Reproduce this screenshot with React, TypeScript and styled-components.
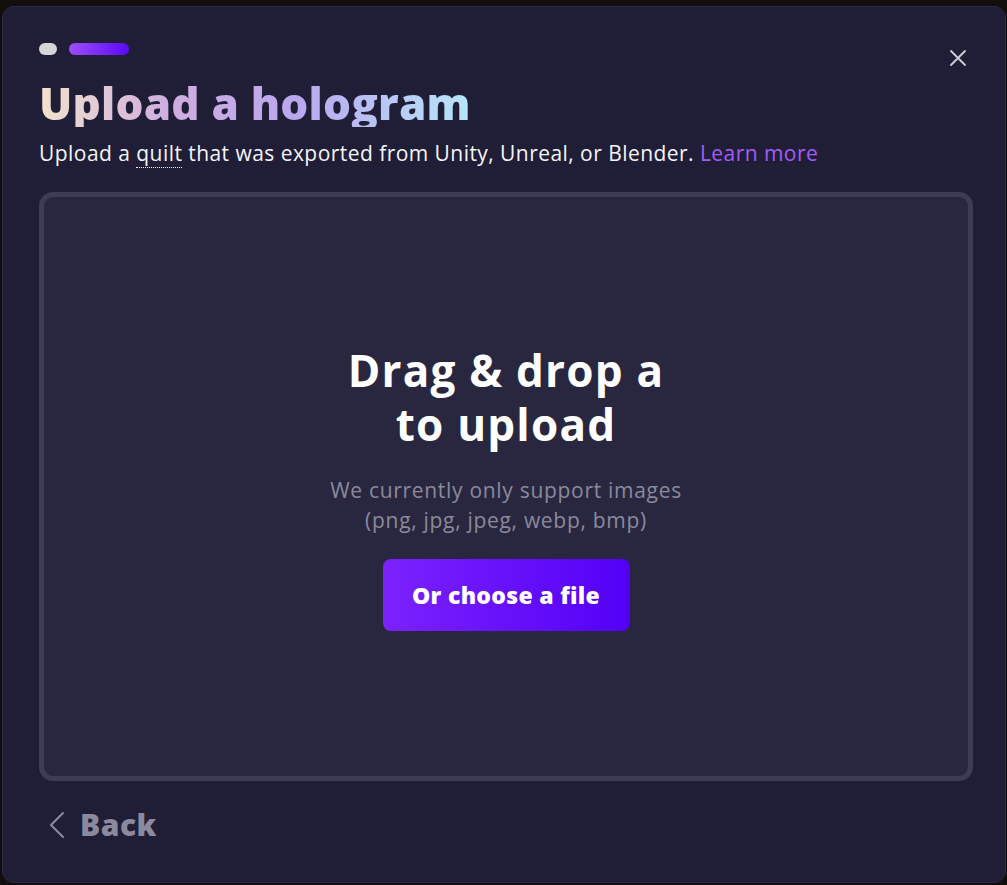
import React from 'react';
import styled, { createGlobalStyle } from 'styled-components';

const GlobalStyle = createGlobalStyle`
  html, body {
    margin: 0;
    padding: 0;
    background: #110e0d;
    font-family: "Open Sans", "Liberation Sans", sans-serif;
  }
  * { box-sizing: border-box; }
`;

const Page = styled.div`
  width: 1007px;
  height: 885px;
  padding: 6px 0 2px 2px;
  overflow: hidden;
`;

const Modal = styled.div`
  position: relative;
  width: 1004px;
  height: 877px;
  background: #1f1e36;
  border: 1px solid #2c2a44;
  border-radius: 12px;
  padding: 36px 32px 0 36px;
  display: flex;
  flex-direction: column;
`;

const Steps = styled.div`
  display: flex;
  gap: 12px;
  height: 12px;
`;

const Step = styled.span<{ $active?: boolean }>`
  display: block;
  height: 12px;
  border-radius: 6px;
  width: ${p => (p.$active ? '60px' : '18px')};
  background: ${p => (p.$active ? 'linear-gradient(90deg, #9d4dff 0%, #5a08f6 100%)' : '#d6d5da')};
`;

const CloseButton = styled.button`
  position: absolute;
  top: 35px;
  right: 31px;
  width: 32px;
  height: 32px;
  padding: 0;
  border: none;
  background: none;
  display: flex;
  align-items: center;
  justify-content: center;
  cursor: pointer;
`;

const Title = styled.h1`
  margin: 24px 0 0;
  font-size: 44px;
  line-height: 48px;
  font-weight: 800;
  letter-spacing: 0.2px;
  background: linear-gradient(90deg, #f2e2cd 0%, #cfaee0 30%, #b9a7ee 60%, #b7e6fa 100%);
  -webkit-background-clip: text;
  background-clip: text;
  color: transparent;
  width: fit-content;
`;

const Subtitle = styled.p`
  margin: 11px 0 0;
  font-size: 21px;
  line-height: 30px;
  letter-spacing: 0.45px;
  color: #f4f4f8;
`;

const Term = styled.span`
  border-bottom: 1px dotted #f4f4f8;
`;

const Link = styled.a`
  color: #a45cf8;
  text-decoration: none;
`;

const DropZone = styled.div`
  margin-top: 24px;
  height: 589px;
  border: 5px solid #3e3b56;
  border-radius: 14px;
  background: #29273f;
  display: flex;
  flex-direction: column;
  align-items: center;
  justify-content: center;
  text-align: center;
`;

const DropTitle = styled.h2`
  margin: 0;
  font-size: 44px;
  line-height: 54px;
  font-weight: 700;
  letter-spacing: 1.2px;
  color: #ffffff;
`;

const DropHint = styled.p`
  margin: 24px 0 0;
  font-size: 21px;
  line-height: 30px;
  letter-spacing: 0.7px;
  color: #8b899c;
`;

const ChooseButton = styled.button`
  margin-top: 24px;
  width: 247px;
  height: 72px;
  border: none;
  border-radius: 8px;
  background: linear-gradient(90deg, #7b22fd 0%, #5300f7 100%);
  color: #ffffff;
  font-family: inherit;
  font-size: 23px;
  font-weight: 800;
  letter-spacing: 0.3px;
  cursor: pointer;
`;

const BackButton = styled.button`
  margin-top: 23px;
  align-self: flex-start;
  display: flex;
  align-items: center;
  gap: 14px;
  padding: 0 0 0 9px;
  border: none;
  background: none;
  color: #8a899d;
  font-family: inherit;
  font-size: 30px;
  font-weight: 800;
  letter-spacing: 0.5px;
  cursor: pointer;
`;

export default function App() {
  return (
    <Page>
      <GlobalStyle />
      <Modal>
        <Steps>
          <Step />
          <Step $active />
        </Steps>
        <CloseButton aria-label="Close">
          <svg width="20" height="20" viewBox="0 0 20 20" fill="none" stroke="#cfcfd6" strokeWidth="1.8" strokeLinecap="round">
            <path d="M3 3 L17 17 M17 3 L3 17" />
          </svg>
        </CloseButton>
        <Title>Upload a hologram</Title>
        <Subtitle>
          Upload a <Term>quilt</Term> that was exported from Unity, Unreal, or Blender. <Link href="#">Learn more</Link>
        </Subtitle>
        <DropZone>
          <DropTitle>
            Drag &amp; drop a
            <br />
            to upload
          </DropTitle>
          <DropHint>
            We currently only support images
            <br />
            (png, jpg, jpeg, webp, bmp)
          </DropHint>
          <ChooseButton>Or choose a file</ChooseButton>
        </DropZone>
        <BackButton>
          <svg width="18" height="28" viewBox="0 0 18 28" fill="none" stroke="#8a899d" strokeWidth="2" strokeLinecap="round" strokeLinejoin="round">
            <path d="M15 2 L3 14 L15 26" />
          </svg>
          Back
        </BackButton>
      </Modal>
    </Page>
  );
}
